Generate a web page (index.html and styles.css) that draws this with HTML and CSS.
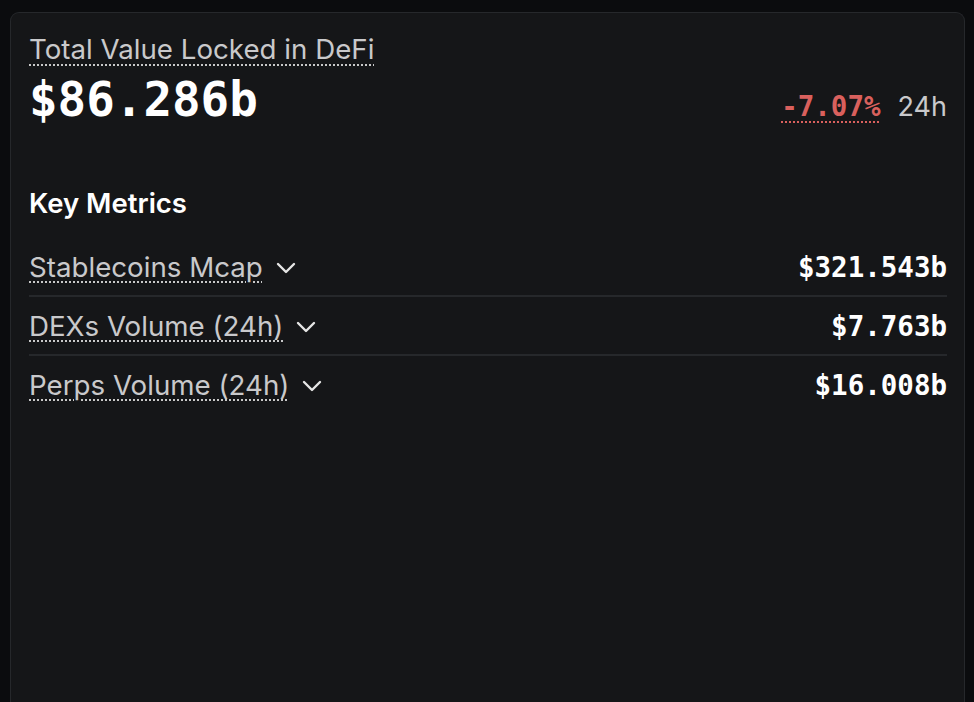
FILE: index.html
```html
<!DOCTYPE html>
<html>
<head>
<meta charset="utf-8">
<link rel="stylesheet" href="styles.css">
</head>
<body>
<div class="card">
  <div class="tvl-label"><span class="dotted">Total Value Locked in DeFi</span></div>
  <div class="tvl-row">
    <div class="tvl-value">$86.286b</div>
    <div class="change"><span class="neg dotted-red">-7.07%</span><span class="period">24h</span></div>
  </div>
  <h2 class="section-title">Key Metrics</h2>
  <div class="metrics">
    <div class="metric">
      <div class="metric-name"><span class="dotted">Stablecoins Mcap</span>
        <svg class="chev" viewBox="0 0 20 12" width="20" height="12"><path d="M2 2l8 8 8-8" fill="none" stroke="currentColor" stroke-width="2.4" stroke-linecap="round" stroke-linejoin="round"/></svg>
      </div>
      <div class="metric-value">$321.543b</div>
    </div>
    <div class="metric">
      <div class="metric-name"><span class="dotted">DEXs Volume (24h)</span>
        <svg class="chev" viewBox="0 0 20 12" width="20" height="12"><path d="M2 2l8 8 8-8" fill="none" stroke="currentColor" stroke-width="2.4" stroke-linecap="round" stroke-linejoin="round"/></svg>
      </div>
      <div class="metric-value">$7.763b</div>
    </div>
    <div class="metric">
      <div class="metric-name"><span class="dotted">Perps Volume (24h)</span>
        <svg class="chev" viewBox="0 0 20 12" width="20" height="12"><path d="M2 2l8 8 8-8" fill="none" stroke="currentColor" stroke-width="2.4" stroke-linecap="round" stroke-linejoin="round"/></svg>
      </div>
      <div class="metric-value">$16.008b</div>
    </div>
  </div>
</div>
</body>
</html>
```

FILE: styles.css
```css
html, body {
  margin: 0;
  padding: 0;
  background: #0b0c0e;
  height: 100%;
  overflow: hidden;
}
body {
  font-family: Inter, "Noto Sans", sans-serif;
  color: #ffffff;
}
.card {
  margin: 12px 9px 0 10px;
  min-height: 720px;
  box-sizing: border-box;
  background: #151618;
  border: 1px solid #26282b;
  border-bottom: none;
  border-radius: 9px 9px 0 0;
  padding: 19px 17px 0 18px;
}
.dotted {
  text-decoration: underline dotted #c8c8c8;
  text-decoration-thickness: 2px;
  text-underline-offset: 5px;
}
.tvl-label {
  font-size: 27.7px;
  line-height: 34px;
  color: #c9c9cb;
}
.tvl-row {
  display: flex;
  justify-content: space-between;
  align-items: baseline;
  margin-top: 8px;
}
.tvl-value {
  font-family: "DejaVu Sans Mono", "Liberation Mono", monospace;
  font-weight: bold;
  font-size: 47.5px;
  line-height: 52px;
}
.change {
  display: flex;
  align-items: baseline;
  gap: 17px;
}
.neg {
  font-family: "DejaVu Sans Mono", "Liberation Mono", monospace;
  font-weight: bold;
  font-size: 27.5px;
  color: #d9605d;
}
.dotted-red {
  text-decoration: underline dotted #d9605d;
  text-decoration-thickness: 2px;
  text-underline-offset: 5px;
}
.period {
  font-size: 27px;
  color: #c9c9cb;
}
.section-title {
  margin: 60px 0 0 0;
  font-size: 27.5px;
  line-height: 34px;
  font-weight: 600;
}
.metrics {
  margin-top: 18px;
}
.metric {
  display: flex;
  justify-content: space-between;
  align-items: center;
  height: 57px;
  border-bottom: 2px solid #26282b;
}
.metric:last-child {
  border-bottom: none;
}
.metric-name {
  display: flex;
  align-items: center;
  gap: 13px;
  font-size: 27.7px;
  color: #c9c9cb;
}
.chev {
  color: #e6e6e6;
  margin-top: 2px;
}
.metric-value {
  font-family: "DejaVu Sans Mono", "Liberation Mono", monospace;
  font-weight: bold;
  font-size: 27.5px;
  color: #ffffff;
}
```
